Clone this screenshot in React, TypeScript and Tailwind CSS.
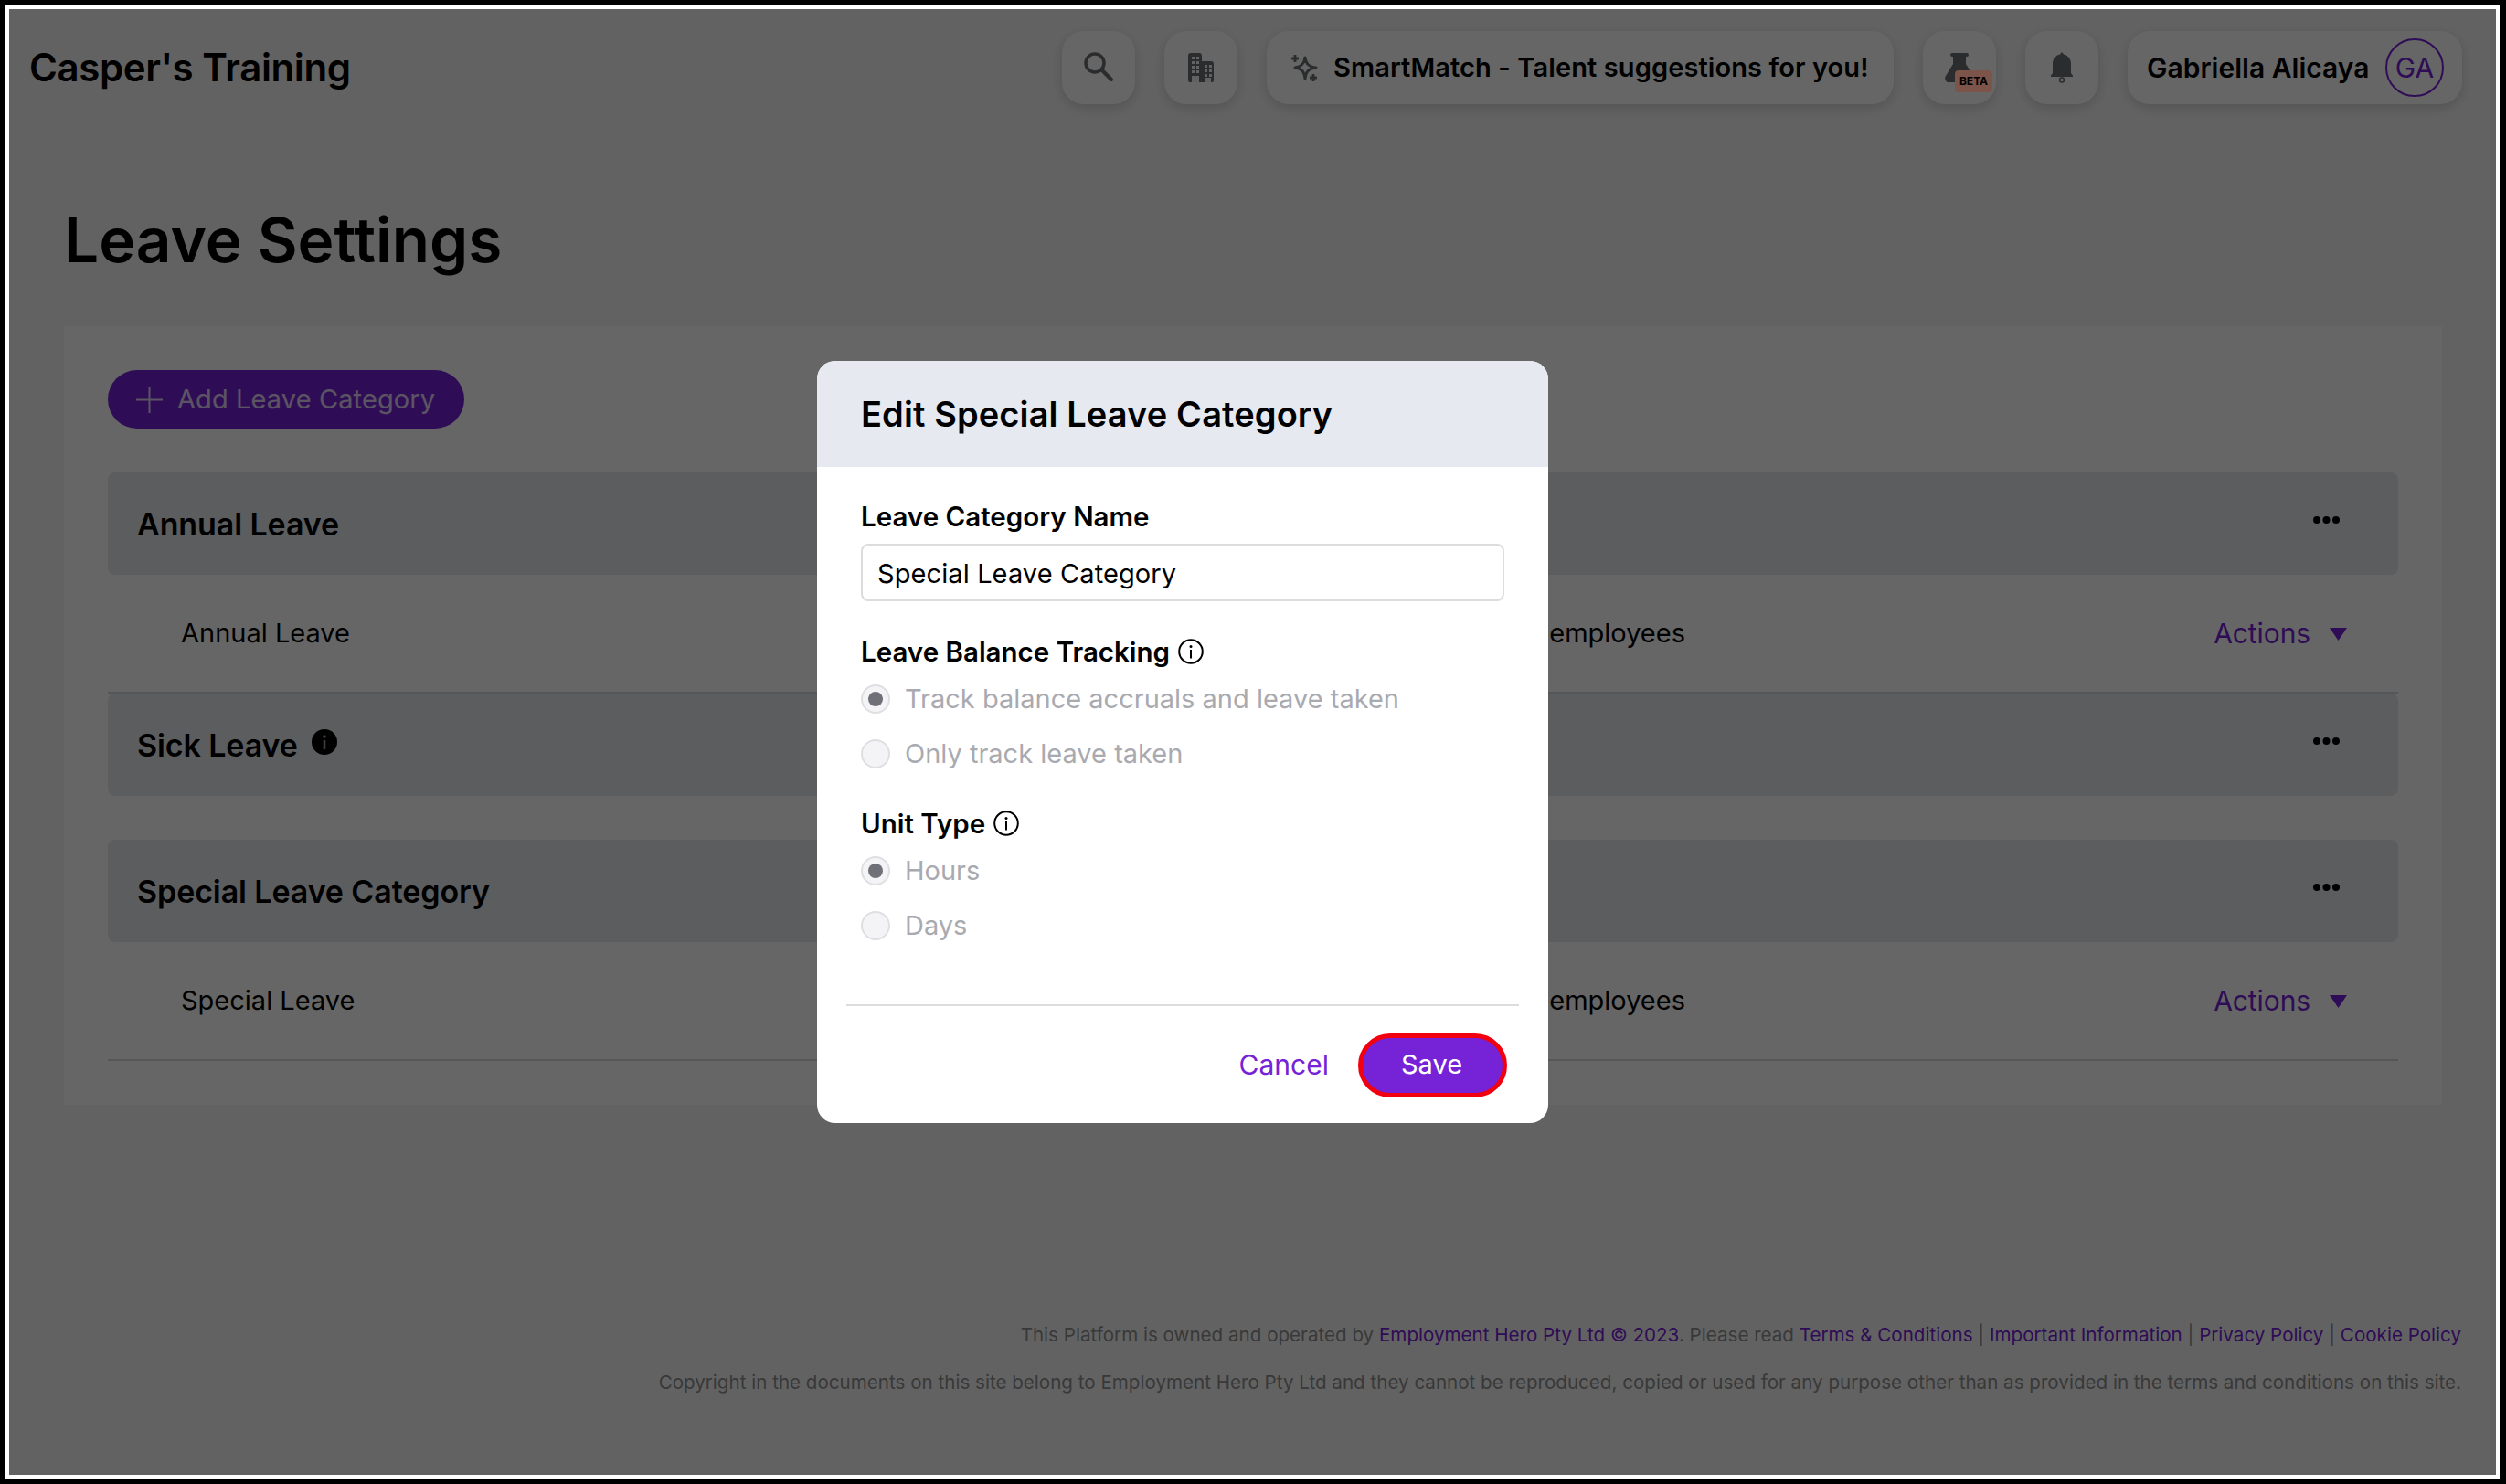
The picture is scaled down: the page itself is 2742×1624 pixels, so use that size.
const font = "font-['Inter','Liberation_Sans',sans-serif]";

const SearchIcon = () => (
  <svg width="44" height="44" viewBox="0 0 44 44" fill="none" stroke="#6b6e72" strokeWidth="3.5" strokeLinecap="round">
    <circle cx="18" cy="17" r="10" />
    <path d="M25.5 24.5 L36 35" strokeWidth="4" />
  </svg>
);

const BuildingIcon = () => (
  <svg width="28" height="32" viewBox="0 0 28 32">
    <path d="M3 0h9a3 3 0 0 1 3 3v6h10a3 3 0 0 1 3 3v18a2 2 0 0 1-2 2H2a2 2 0 0 1-2-2V3a3 3 0 0 1 3-3z" fill="#6b6e72" />
    <g fill="#f5f5f5">
      <rect x="4" y="4" width="3" height="3" /><rect x="9" y="4" width="3" height="3" />
      <rect x="4" y="9" width="3" height="3" /><rect x="9" y="9" width="3" height="3" />
      <rect x="4" y="14" width="3" height="3" /><rect x="9" y="14" width="3" height="3" />
      <rect x="4" y="19" width="3" height="3" /><rect x="9" y="19" width="3" height="3" />
      <rect x="18" y="13" width="3" height="3" /><rect x="23" y="13" width="3" height="3" />
      <rect x="18" y="18" width="3" height="3" /><rect x="23" y="18" width="3" height="3" />
      <rect x="18" y="23" width="3" height="3" /><rect x="23" y="23" width="3" height="3" />
      <rect x="4" y="25" width="8" height="7" /><rect x="19" y="27" width="6" height="5" />
    </g>
  </svg>
);

const SparkleIcon = () => (
  <svg width="30" height="30" viewBox="0 0 30 30" fill="none" stroke="#6b6e72">
    <path d="M15 4 C16 11 19 14 27 15 C19 16 16 19 15 27 C14 19 11 16 4 15 C11 14 14 11 15 4 Z" strokeWidth="3" strokeLinejoin="round" />
    <path d="M4 1v8M0 5h8M24 22v8M20 26h8" strokeWidth="2.8" />
  </svg>
);

const FlaskIcon = () => (
  <svg width="32" height="32" viewBox="0 0 32 32">
    <path d="M8 0h16a1.5 1.5 0 0 1 0 4h-1v8l8 13c2 3 0 7-3 7H4c-3 0-5-4-3-7l8-13V4H8a2 2 0 0 1 0-4z" fill="#6b6e72" />
  </svg>
);

const BellIcon = () => (
  <svg width="26" height="34" viewBox="0 0 26 34">
    <path d="M13 0l2 2.500c5 1.200 8 5 8 10.500v10l2 2.500v1.500H1V25.500L3 23V13C3 7.500 6 3.700 11 2.500z" fill="#6b6e72" />
    <circle cx="13" cy="30.500" r="2.500" fill="none" stroke="#6b6e72" strokeWidth="1.500" />
  </svg>
);

const InfoIcon = ({ solid }: { solid?: boolean }) => (
  <svg width="28" height="28" viewBox="0 0 28 28">
    {solid ? (
      <>
        <circle cx="14" cy="14" r="14" fill="#000" />
        <circle cx="14" cy="8" r="1.800" fill="#999" />
        <rect x="12.700" y="12" width="2.600" height="10" fill="#999" />
      </>
    ) : (
      <>
        <circle cx="14" cy="14" r="12.800" fill="none" stroke="#000" strokeWidth="2" />
        <circle cx="14" cy="8.500" r="1.500" fill="#000" />
        <rect x="13" y="12" width="2" height="9.500" fill="#000" />
      </>
    )}
  </svg>
);

const Dots = () => (
  <svg width="29" height="8" viewBox="0 0 29 8" className="mb-2">
    <circle cx="4" cy="4" r="4" /><circle cx="14.500" cy="4" r="4" /><circle cx="25" cy="4" r="4" />
  </svg>
);

const TopButton = ({ children, className = "" }: { children: React.ReactNode; className?: string }) => (
  <div className={`relative flex h-20 items-center rounded-3xl bg-white shadow-[0_4px_14px_rgba(0,0,0,0.16)] ${className}`}>
    {children}
  </div>
);

const CategoryHeader = ({ title, info }: { title: string; info?: boolean }) => (
  <div className="flex h-28 items-center justify-between rounded-lg bg-[#e6e9ee] pl-8 pr-16">
    <div className="flex items-center gap-[15px]">
      <span className="text-[34px] font-semibold tracking-[-0.1px] text-black">{title}</span>
      {info && <span className="mb-1.5"><InfoIcon solid /></span>}
    </div>
    <Dots />
  </div>
);

const CategoryRow = ({ name }: { name: string }) => (
  <div className="flex h-[130px] items-center border-b-2 border-[#d4d7dc] pr-14">
    <div className="flex w-[1726px] justify-between pl-20 text-[29px] text-black">
      <span>{name}</span>
      <span>All employees</span>
    </div>
    <div className="ml-auto flex items-center gap-[21px] text-[30px] tracking-[-0.1px] text-[#7622d7]">
      <span>Actions</span>
      <svg width="19" height="14" viewBox="0 0 19 14" className="mt-0.5"><path d="M0 0h19L9.500 14z" fill="#7622d7" /></svg>
    </div>
  </div>
);

const Radio = ({ label, checked }: { label: string; checked?: boolean }) => (
  <div className="flex h-8 items-center gap-4">
    <span className="flex h-8 w-8 items-center justify-center rounded-full border-2 border-[#dedfe3] bg-[#f4f4f6]">
      {checked && <span className="h-4 w-4 rounded-full bg-[#6f7078]" />}
    </span>
    <span className="text-[29px] text-[#a9aab0]">{label}</span>
  </div>
);

const FieldLabel = ({ children, className = "" }: { children: React.ReactNode; className?: string }) => (
  <div className={`flex h-9 items-center gap-[9px] text-[29.5px] font-semibold text-black ${className}`}>{children}</div>
);

const A = ({ children }: { children: React.ReactNode }) => <span className="text-[#7622d7]">{children}</span>;

export default function App() {
  return (
    <div className={`h-[1624px] w-[2742px] overflow-hidden border-[6px] border-r-[7px] border-black ${font}`}>
      <div className="h-full border-4 border-white">
        <div className="relative h-full bg-[#f6f6f6]">
          <header className="flex items-start pl-[22px] pr-[37px] pt-6">
            <div className="flex h-20 items-center pb-0.5 text-[42px] font-semibold tracking-[-0.4px] text-black">Casper's Training</div>
            <div className="ml-auto flex gap-8">
              <TopButton className="w-20 justify-center"><SearchIcon /></TopButton>
              <TopButton className="w-20 justify-center"><BuildingIcon /></TopButton>
              <TopButton className="w-[686px] gap-[16px] pl-[27px]">
                <SparkleIcon />
                <span className="text-[29px] font-semibold tracking-[0.1px] text-black">SmartMatch - Talent suggestions for you!</span>
              </TopButton>
              <TopButton className="w-20 justify-center">
                <FlaskIcon />
                <span className="absolute left-[35px] top-[43px] z-20 flex h-6 w-[41px] items-center justify-center rounded bg-[#7d544a] text-[12px] font-bold text-black">BETA</span>
              </TopButton>
              <TopButton className="w-20 justify-center"><BellIcon /></TopButton>
              <TopButton className="w-[366px] justify-between pl-[21px] pr-5">
                <span className="text-[30px] font-semibold text-black">Gabriella Alicaya</span>
                <span className="flex h-16 w-16 items-center justify-center rounded-full border-2 border-[#7622d7] text-[30px] text-[#7622d7]">GA</span>
              </TopButton>
            </div>
          </header>

          <h1 className="ml-[60px] mt-[100px] text-[67.5px] font-semibold leading-[98px] text-black">Leave Settings</h1>

          <main className="ml-[60px] mr-[59px] mt-[45px] bg-white p-12">
            <button className="flex h-16 w-[390px] items-center gap-4 rounded-full bg-[#7622d7] pl-[31px] text-[29px] tracking-[0.1px] text-white/80">
              <svg width="29" height="29" viewBox="0 0 29 29" stroke="currentColor" strokeWidth="2"><path d="M14.500 0v29M0 14.500h29" /></svg>
              Add Leave Category
            </button>
            <div className="mt-12">
              <CategoryHeader title="Annual Leave" />
              <CategoryRow name="Annual Leave" />
              <CategoryHeader title="Sick Leave" info />
              <div className="mt-12">
                <CategoryHeader title="Special Leave Category" />
              </div>
              <CategoryRow name="Special Leave" />
            </div>
          </main>

          <footer className="mt-[237px] pr-[38px] text-right text-[20.6px] leading-[30px] text-[#8f8f8f]">
            <p>
              This Platform is owned and operated by <A>Employment Hero Pty Ltd © 2023</A>. Please read <A>Terms &amp; Conditions</A> | <A>Important Information</A> | <A>Privacy Policy</A> | <A>Cookie Policy</A>
            </p>
            <p className="mt-[22px]">
              Copyright in the documents on this site belong to Employment Hero Pty Ltd and they cannot be reproduced, copied or used for any purpose other than as provided in the terms and conditions on this site.
            </p>
          </footer>

          <div className="absolute inset-0 z-10 bg-black/60">
            <div className="absolute left-[884px] top-[385px] w-[800px] overflow-hidden rounded-[20px] bg-white">
              <div className="flex h-[116px] items-center bg-[#e6eaf0] pl-12 text-[38px] font-semibold tracking-[0.1px] text-black">
                Edit Special Leave Category
              </div>
              <div className="pl-12 pr-[47px] pt-9">
                <FieldLabel>Leave Category Name</FieldLabel>
                <input
                  readOnly
                  value="Special Leave Category"
                  className="mt-3 h-[63px] w-[704px] rounded-lg border-2 border-[#dcdcdf] pl-4 pt-0.5 text-[29px] tracking-[0.1px] text-black outline-none"
                />
                <FieldLabel className="mt-[37px]">Leave Balance Tracking <InfoIcon /></FieldLabel>
                <div className="mt-[18px] flex flex-col gap-7">
                  <Radio label="Track balance accruals and leave taken" checked />
                  <Radio label="Only track leave taken" />
                </div>
                <FieldLabel className="mt-[42px]">Unit Type <InfoIcon /></FieldLabel>
                <div className="mt-[18px] flex flex-col gap-7">
                  <Radio label="Hours" checked />
                  <Radio label="Days" />
                </div>
              </div>
              <div className="mx-8 mt-[70px] h-0.5 bg-[#dcdcdf]" />
              <div className="flex items-center justify-end gap-8 pb-7 pr-[45px] pt-[30px]">
                <span className="mb-0.5 text-[30px] text-[#7622d7]">Cancel</span>
                <button className="h-[70px] w-[163px] rounded-[35px] border-[5px] border-[#f2000f] bg-[#7622d7] pb-0.5 pr-0.5 text-[29px] text-white">Save</button>
              </div>
            </div>
          </div>
        </div>
      </div>
    </div>
  );
}
